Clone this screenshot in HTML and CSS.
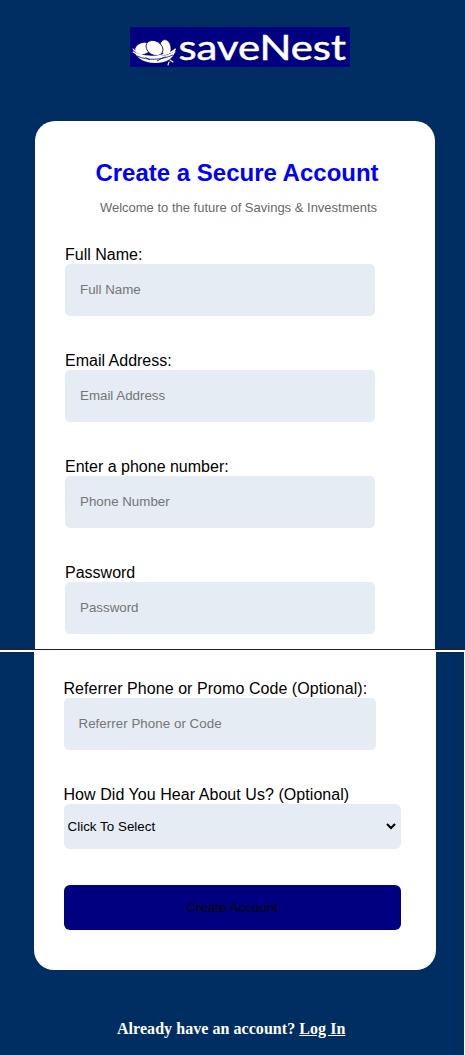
FILE: index.html
```html
<!DOCTYPE html>
<html lang="en">
<head>
<meta charset="utf-8">
<title>saveNest</title>
<link rel="stylesheet" href="styles.css">
</head>
<body>
<section class="panel panel-top">
  <svg class="logo" width="220" height="40" viewBox="0 0 220 40" role="img" aria-label="saveNest">
    <path d="M3 22C8 27 16 29 24 29S39 27 45.500 22C45 30 38 36 25 36C14 36 6 31 3 22Z" fill="#fff"/>
    <g fill="#fff" stroke="#000080" stroke-width=".8">
      <ellipse cx="35.500" cy="20.500" rx="5.500" ry="8" transform="rotate(-10 35.500 20.500)"/>
      <ellipse cx="13" cy="21.500" rx="8.500" ry="6" transform="rotate(-18 13 21.500)"/>
      <ellipse cx="24.500" cy="21" rx="9" ry="7" transform="rotate(32 24.500 21)"/>
    </g>
    <g fill="none" stroke="#000080" stroke-width=".8">
      <path d="M4 24.500C14 31 31 31 45 25M7 29C18 34 31 33 43 28M12 28l8 5M27 34l9-5"/>
    </g>
    <g fill="none" stroke="#fff" stroke-width="1.100" stroke-linecap="round">
      <path d="M3 22C9 29 19 30 27 29S41 26 45.500 22M3 25C14 32 33 32 45 25M40 33l3 2M39 35l-1 3"/>
    </g>
    <text class="logo-text" x="48.500" y="33" textLength="167.500" lengthAdjust="spacingAndGlyphs">saveNest</text>
  </svg>
  <main class="card card-top">
    <h1 class="title">Create a Secure Account</h1>
    <p class="subtitle">Welcome to the future of Savings &amp; Investments</p>
    <div class="field"><label class="label" for="name">Full Name:</label><input class="input" id="name" placeholder="Full Name"></div>
    <div class="field"><label class="label" for="email">Email Address:</label><input class="input" id="email" placeholder="Email Address"></div>
    <div class="field"><label class="label" for="phone">Enter a phone number:</label><input class="input" id="phone" placeholder="Phone Number"></div>
    <div class="field"><label class="label" for="password">Password</label><input class="input" id="password" type="password" placeholder="Password"></div>
  </main>
</section>
<section class="panel panel-bottom">
  <div class="card card-bottom">
    <div class="field"><label class="label label-wide" for="code">Referrer Phone or Promo Code (Optional):</label><input class="input input-code" id="code" placeholder="Referrer Phone or Code"></div>
    <label class="label label-wide" for="source">How Did You Hear About Us? (Optional)</label>
    <select class="select" id="source"><option>Click To Select</option></select>
    <button class="submit">Create Account</button>
  </div>
  <p class="login">Already have an account? <a class="login-link" href="#">Log In</a></p>
</section>
</body>
</html>
```
FILE: styles.css
```css
* { box-sizing: border-box; }
body { margin: 0; background: #fff; font-family: "Liberation Sans", Arial, sans-serif; color: #000; }
.panel { display: flex; flex-direction: column; background: #002d62; }
.panel-top { height: 650px; padding: 27px 0 0 35px; border-bottom: 1px solid #231f20; }
.panel-bottom { height: 403px; margin: 2px 1px 0 0; padding-left: 33.500px; }
.logo { display: block; margin-left: 95px; background: #000080; flex: none; overflow: visible; }
.logo-text { font-family: Lato, "Open Sans", sans-serif; font-size: 34.500px; fill: #fff; stroke: #fff; stroke-width: .5px; }
.card { background: #fff; padding: 0 30px; }
.card-top { width: 400px; height: 528px; margin-top: 54px; padding-top: 38px; border-radius: 20px 20px 0 0; }
.card-bottom { width: 402px; height: 318px; padding-top: 27px; border-radius: 0 0 20px 20px; }
.title { margin: 0 0 0 4px; text-align: center; font-size: 24px; line-height: 28px; color: #00f; white-space: nowrap; }
.subtitle { margin: 13px 0 29px 7px; text-align: center; font-size: 13px; line-height: 16px; color: #696969; white-space: nowrap; }
.field { height: 106px; }
.label { display: block; font-size: 16px; line-height: 20px; height: 19px; white-space: nowrap; }
.label-wide { letter-spacing: .055px; }
.input { display: block; width: 310px; height: 52px; border: 0; border-radius: 5px; padding: 0 15px 2px; background: #e5ecf4; font: 13.333px "Liberation Sans", Arial, sans-serif; }
.input::placeholder { color: #757575; opacity: 1; }
.input-code { width: 312px; letter-spacing: .04px; }
.select { display: block; width: 337px; height: 45px; border: 0; border-right: 2px solid #e5ecf4; border-radius: 6px; padding: 0; background: #e5ecf4; font: 13.333px "Liberation Sans", Arial, sans-serif; letter-spacing: .04px; color: #000; }
.submit { display: block; width: 337px; height: 45px; margin-top: 36px; border: 0; border-radius: 6px; background: #000080; font: 13.333px "Liberation Sans", Arial, sans-serif; letter-spacing: .04px; color: #000; }
.login { margin: 49px 0 0 83.500px; font: bold 16px/20px "Liberation Serif", "Times New Roman", serif; letter-spacing: .05px; color: #fff; white-space: nowrap; }
.login-link { color: #fff; }
```
